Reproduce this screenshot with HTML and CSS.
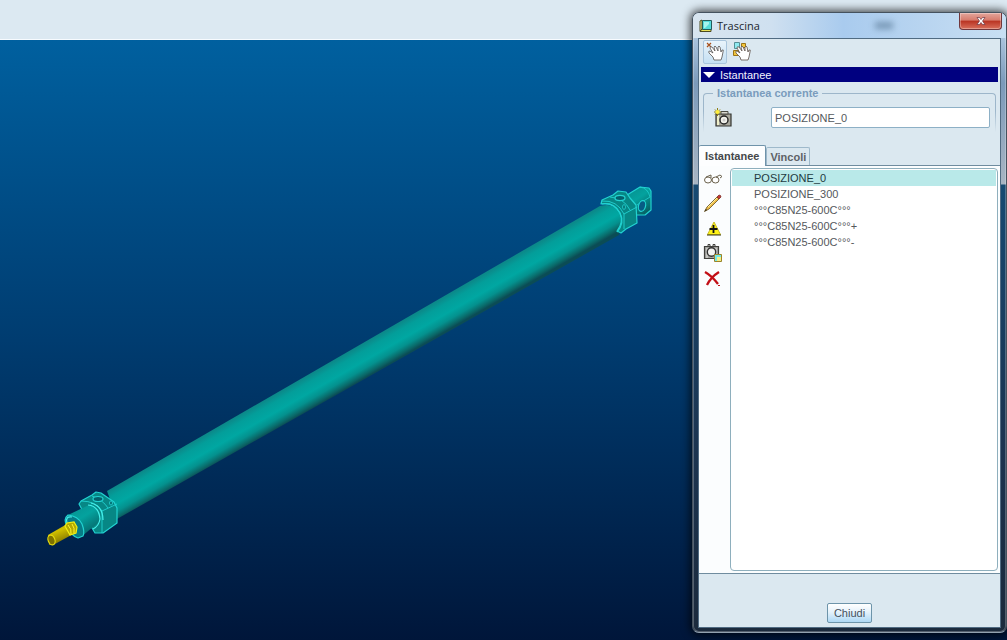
FILE: index.html
```html
<!DOCTYPE html>
<html lang="it">
<head>
<meta charset="utf-8">
<title>Trascina</title>
<link rel="stylesheet" href="styles.css">
</head>
<body>
<div class="app">
  <header class="topbar"></header>
  <main class="viewport">
    <svg class="scene" viewBox="0 40 1007 600" preserveAspectRatio="xMinYMin meet" role="img" aria-label="Cilindro">
      <defs>
        <linearGradient id="tube" gradientUnits="userSpaceOnUse" x1="355" y1="349" x2="370" y2="375">
          <stop offset="0" stop-color="#0b8a8a"/>
          <stop offset=".2" stop-color="#039e9a"/>
          <stop offset=".5" stop-color="#00a7a2"/>
          <stop offset=".72" stop-color="#04918e"/>
          <stop offset=".9" stop-color="#0a6868"/>
          <stop offset="1" stop-color="#0b4c55"/>
        </linearGradient>
        <linearGradient id="rod" x1="0" y1="0" x2=".5" y2="1">
          <stop offset="0" stop-color="#9a8f00"/>
          <stop offset=".4" stop-color="#d0c000"/>
          <stop offset="1" stop-color="#776a00"/>
        </linearGradient>
        <linearGradient id="collar" x1="0" y1="0" x2=".6" y2="1">
          <stop offset="0" stop-color="#078d8d"/>
          <stop offset=".5" stop-color="#04a29e"/>
          <stop offset="1" stop-color="#066467"/>
        </linearGradient>
      </defs>
      <path d="M107 491L600 206Q614 202 620 213Q623 222 619 235L117 519Z" fill="url(#tube)"/>
      <g stroke="#22d2d1" stroke-width="1.2" stroke-linejoin="round">
        <path d="M627 195L640 187L649 188L651 191V210L645 215L636 215L628 205Z" fill="url(#collar)"/>
        <path d="M640 187Q648 188 650 197L637 205" fill="none" stroke-width=".8"/>
        <ellipse cx="642" cy="206" rx="3.5" ry="5.5" transform="rotate(15 642 206)" fill="#075c84"/>
        <path d="M601 204L602 200L613 195L618 191L626 192L630 198L636 205L637 223L626 229L621 233L617 231Q624 222 620 213Q614 202 601 204Z" fill="#078785"/>
        <path d="M602 201Q617 200 624 214L637 207M624 214V229M610 197Q624 198 630 210" fill="none" stroke-width=".9"/>
        <ellipse cx="620" cy="198" rx="5" ry="2.6" fill="#04606c"/>
        <ellipse cx="624" cy="207" rx="1.5" ry="2.4" fill="#087477" stroke-width=".8"/>
        <path d="M602 204Q614 202 620 213Q625 223 617 232" fill="none"/>
      </g>
      <g stroke="#22d2d1" stroke-width="1.2" stroke-linejoin="round">
        <path d="M79 504L81 501L92 495L96 492L101 493L114 502L117 508V523L103 533L95 533L92 528Z" fill="#078785"/>
        <path d="M81 501Q96 501 102 511L117 504M102 511V533M92 496Q103 500 108 508" fill="none" stroke-width=".9"/>
        <ellipse cx="98" cy="499" rx="5" ry="2.5" fill="#04606c"/>
        <ellipse cx="111" cy="503" rx="1.6" ry="2" fill="#087477" stroke-width=".8"/>
        <path d="M68 515L91 504Q100 509 99 522L81 537Q67 532 68 515Z" fill="url(#collar)" stroke="none"/>
        <path d="M88 505Q99 506 100 519Q99 526 93 529M91 503Q103 506 103 520" fill="none" stroke="#45eeea"/>
        <path d="M68 515Q63 519 67 526Q70 535 78 538L83 536Q85 532 82 524Q78 516 68 515Z" fill="#077b86"/>
        <path d="M67 523Q65 516 72 517" fill="none" stroke="#45eeea"/>
      </g>
      <path d="M48 535L67 524L75 533L55 544L49 545Z" fill="url(#rod)"/>
      <path d="M65 526L67 523L74 522L77 527L76 533L70 535Z" fill="#b4a900" stroke="#f3ef12" stroke-width="1.2"/>
      <path d="M68 525Q72 529 71 534M72 524Q75 528 74 533" fill="none" stroke="#fff632"/>
      <ellipse cx="51.5" cy="540" rx="3.4" ry="5" transform="rotate(-20 51.5 540)" fill="#7e7200" stroke="#e6dc10" stroke-width="1.2"/>
    </svg>
  </main>

  <section class="window" aria-label="Trascina">
    <div class="titlebar">
      <svg class="appicon" viewBox="0 0 14 14" aria-hidden="true">
        <path d="M1 2L3 1V10L1 12Z" fill="#f6ef9a" stroke="#4a4a20"/>
        <path d="M1 12.5L3 10H12V12.5Z" fill="#eae25a" stroke="#4a4a20"/>
        <path d="M3.5 1.5H12.5V10.5H3.5Z" fill="#55dcdc" stroke="#235c5c"/>
        <path d="M5 3H10V5L6 9H5Z" fill="#a6f4ef"/>
      </svg>
      <h1 class="title">Trascina</h1>
      <span class="smudge"></span>
      <button class="close" type="button" aria-label="Chiudi finestra">
        <svg viewBox="0 0 10 8" aria-hidden="true"><path d="M1 .5H3.5L5 2.500L6.500 .5H9L6.500 4L9 7.500H6.500L5 5.500L3.500 7.500H1L3.500 4Z" fill="#fff" stroke="#6b3440" stroke-width=".7"/></svg>
      </button>
    </div>

    <div class="client">
      <div class="toolbar">
        <button class="tool selected" type="button" aria-label="Trascina punto">
          <svg viewBox="0 0 22 22" aria-hidden="true">
            <path d="M3 2L7 6M7 2L3 6" stroke="#a8501c" stroke-width="1.2"/>
            <path d="M10 19L9 16L5 12Q4 10 6 10L9 12L6 7Q6 5 8 6L11 10L10 6Q11 4 12 6L14 10L14 6Q15 4 16 6L17 11L18 9Q20 8 19 11L18 16L17 19Z" fill="#fff" stroke="#55504e" stroke-width=".8"/>
          </svg>
        </button>
        <button class="tool" type="button" aria-label="Trascina corpo">
          <svg viewBox="0 0 22 22" aria-hidden="true">
            <path d="M3.500 1.500H8.500V7.500H3.500Z" fill="#8eeaf0" stroke="#568f96"/>
            <path d="M10.500 2.500H14.500V6.500H10.500ZM2.500 9.500H7.500V14.500H2.500Z" fill="#f2c53c" stroke="#9b7415"/>
            <path d="M10 19L9 16L5 12Q4 10 6 10L9 12L6 7Q6 5 8 6L11 10L10 6Q11 4 12 6L14 10L14 6Q15 4 16 6L17 11L18 9Q20 8 19 11L18 16L17 19Z" fill="#fff" stroke="#5d4f48" stroke-width=".8"/>
          </svg>
        </button>
      </div>

      <button class="section" type="button" aria-expanded="true">
        <svg viewBox="0 0 12 6" aria-hidden="true"><path d="M0 0H12L6 6Z" fill="#fff"/></svg>
        Istantanee
      </button>

      <fieldset class="current">
        <legend>Istantanea corrente</legend>
        <div class="current-row">
          <button class="snap" type="button" aria-label="Scatta istantanea">
            <svg viewBox="0 0 20 20" aria-hidden="true">
              <path d="M3 6H18V18H3Z" fill="#aaa99f" stroke="#33332e" stroke-width="1.2"/>
              <path d="M4 7H6V17H4Z" fill="#eeeec9"/>
              <path d="M8 3.500H15V6H8Z" fill="#d8d8d0" stroke="#4c4c46"/>
              <circle cx="11" cy="12" r="4" fill="#f2f2ec" stroke="#222" stroke-width="1.4"/>
              <circle cx="11" cy="12" r="1.5" fill="#ccc"/>
              <path d="M4.500 0V8M1 4H8M2 1.500L7 6.500M7 1.500L2 6.500" stroke="#8d7e10"/>
              <circle cx="4.5" cy="4" r="2" fill="#ffef3c"/>
            </svg>
          </button>
          <input class="name" type="text" value="POSIZIONE_0" aria-label="Nome istantanea corrente">
        </div>
      </fieldset>

      <div class="tabs" role="tablist">
        <button class="tab active" type="button" role="tab" aria-selected="true">Istantanee</button>
        <button class="tab" type="button" role="tab" aria-selected="false">Vincoli</button>
      </div>

      <div class="panel" role="tabpanel">
        <div class="sidebar">
          <button class="side" type="button" aria-label="Visualizza">
            <svg viewBox="0 0 20 20" aria-hidden="true"><g fill="#fff" stroke="#6b624d"><ellipse cx="5" cy="12" rx="3.500" ry="3"/><ellipse cx="12.500" cy="12" rx="3.500" ry="3"/><path d="M3 9L8 7V10M13 9L17 7L19 8.500L17 10" fill="none"/></g></svg>
          </button>
          <button class="side" type="button" aria-label="Modifica">
            <svg viewBox="0 0 20 20" aria-hidden="true"><path d="M1.500 18.500L4 14L14 4L16 6L6 16Z" fill="#eebd48" stroke="#66501f" stroke-width=".8"/><path d="M5 14L14 5" stroke="#fff0a0"/><path d="M14 4L16 2Q18 2 18 4L16 6Z" fill="#c53831" stroke="#7c302a" stroke-width=".8"/><path d="M1.500 18.500L3 16L4 17Z" fill="#2c2515"/></svg>
          </button>
          <button class="side" type="button" aria-label="Aggiungi">
            <svg viewBox="0 0 20 20" aria-hidden="true"><path d="M11 4L17.500 16.500H4.500Z" fill="#fff316" stroke="#c9bd24"/><path d="M4 17H18" stroke="#3b390f"/><path d="M10.500 7V15M6.500 11H14.500" stroke="#111" stroke-width="1.8"/></svg>
          </button>
          <button class="side" type="button" aria-label="Usa nel disegno">
            <svg viewBox="0 0 20 20" aria-hidden="true"><path d="M1.500 3.500H15.500V15.500H1.500Z" fill="#a4a4a0" stroke="#40403c" stroke-width="1.2"/><path d="M4 15V5M13 5V11" stroke="#e8e8e4"/><path d="M5 3V1.500H7V3M10 3V1.500H12V3" fill="#ddd" stroke="#40403c"/><circle cx="8.500" cy="9" r="4.200" fill="#f4f4f2" stroke="#333" stroke-width="1.4"/><path d="M11.500 11.500H18.500V18.500H11.500Z" fill="#72e7e7" stroke="#9d8428"/><path d="M14 18V14H18V18Z" fill="#f5ef87"/></svg>
          </button>
          <button class="side" type="button" aria-label="Elimina">
            <svg viewBox="0 0 20 20" aria-hidden="true"><path d="M2 4Q9 8 15 16M16 4Q8 9 4 17" fill="none" stroke="#c20f16" stroke-width="2.300"/><path d="M15 17.500H17" stroke="#c20f16"/></svg>
          </button>
        </div>
        <ul class="list" role="listbox" aria-label="Istantanee">
          <li class="row chosen" role="option" aria-selected="true">POSIZIONE_0</li>
          <li class="row" role="option">POSIZIONE_300</li>
          <li class="row" role="option">°°°C85N25-600C°°°</li>
          <li class="row" role="option">°°°C85N25-600C°°°+</li>
          <li class="row" role="option">°°°C85N25-600C°°°-</li>
        </ul>
      </div>

      <footer class="footer">
        <button class="dismiss" type="button">Chiudi</button>
      </footer>
    </div>
  </section>
</div>
</body>
</html>
```
FILE: styles.css
```css
* { box-sizing: border-box; }

body {
  margin: 0;
  font: 11px/16px "Liberation Sans", Arial, sans-serif;
  color: #55585c;
}

button, input {
  font: inherit;
  color: inherit;
  margin: 0;
  padding: 0;
}

button {
  border: 0;
  background: none;
}

svg { display: block; }

.app {
  position: relative;
  display: flex;
  flex-direction: column;
  min-height: 100vh;
  overflow: hidden;
}

.topbar {
  height: 40px;
  background: #dce9f2;
  border-bottom: 1px solid #f7fbff;
}

.viewport {
  flex: 1;
  background: linear-gradient(#00609f, #003c70 50%, #00163a);
}

.scene { width: 100%; }

/* Floating dialog */
.window {
  position: absolute;
  top: 12px;
  right: 0;
  bottom: 7px;
  width: 315px;
  display: flex;
  flex-direction: column;
  padding: 0 5px 4px;
  border: 1px solid #45525e;
  border-bottom-color: #93a2b0;
  border-radius: 7px;
  background: linear-gradient(#c3daf0, #7b9aba 70px, #a8b5c3 171px, #174a72 172px, #1b3552 420px, #1c2a3c);
  box-shadow: inset 0 0 0 1px #ffffff40, 0 0 9px 2px #000000b0;
}

.titlebar {
  display: flex;
  align-items: center;
  gap: 4px;
  height: 25px;
  margin: 0 -5px;
  padding-left: 6px;
  border-radius: 6px 6px 0 0;
  background: linear-gradient(90deg, #d8e5ef, #cfe0f0 25%, #a9cbee 48%, #b9d5f0 75%, #c8dff3);
}

.appicon { width: 14px; height: 14px; }

.title {
  margin: 0;
  font: 11px/16px "Open Sans", sans-serif;
  color: #20262d;
}

.smudge {
  width: 18px;
  height: 7px;
  margin-left: auto;
  background: #7696b4;
  filter: blur(3px);
}

.close {
  display: flex;
  align-items: center;
  justify-content: center;
  align-self: flex-start;
  width: 43px;
  height: 17px;
  margin: 0 4px 0 62px;
  border: 1px solid #71373c;
  border-top: 0;
  border-radius: 0 0 4px 4px;
  background: linear-gradient(#e3a69c, #d77b6c 45%, #b93322 50%, #d9705c);
  box-shadow: inset 0 0 0 1px #ffffff50;
}

.close svg { width: 10px; height: 8px; }

.client {
  flex: 1;
  display: flex;
  flex-direction: column;
  border: 1px solid #506b82;
  background: #dbe8f0;
}

.toolbar {
  display: flex;
  gap: 3px;
  padding: 1px 4px 3px;
}

.tool {
  width: 24px;
  height: 24px;
  border: 1px solid transparent;
  border-radius: 2px;
}

.tool.selected {
  border-color: #a9c5dc;
  background: linear-gradient(#e9f4fb, #c5e0f3);
}

.section {
  display: flex;
  align-items: center;
  gap: 5px;
  height: 15px;
  margin: 0 2px;
  padding-left: 2px;
  background: #000080;
  color: #f2f4ff;
}

.section svg { width: 12px; height: 6px; }

.current {
  position: relative;
  min-width: 0;
  height: 50px;
  margin: 3px 4px 10px;
  padding: 0 5px 0 9px;
  border: 1px solid #9db6ca;
  border-bottom: 0;
  border-radius: 4px 4px 0 0;
}

.current::after {
  content: "";
  position: absolute;
  inset: 10px -1px -8px;
  background: linear-gradient(#dbe8f000, #dbe8f0 85%);
}

.current legend {
  padding: 0 4px;
  font-weight: bold;
  color: #7a9cbd;
}

.current-row {
  position: relative;
  z-index: 1;
  display: flex;
  align-items: center;
  gap: 38px;
  padding-top: 6px;
}

.snap svg { width: 20px; height: 20px; }

.name {
  flex: 1;
  min-width: 0;
  height: 21px;
  padding: 0 3px;
  border: 1px solid #8db0c6;
  border-radius: 2px;
  background: #fff;
}

.tabs {
  display: flex;
  align-items: flex-end;
  height: 20px;
}

.tab {
  height: 18px;
  padding: 0 3px;
  border: 1px solid #9eb9cb;
  border-bottom: 0;
  border-radius: 2px 2px 0 0;
  font-weight: bold;
  color: #5e6266;
}

.tab.active {
  position: relative;
  z-index: 1;
  height: 21px;
  margin-bottom: -1px;
  padding: 0 6px;
  border-color: #6f93aa;
  border-left-width: 0;
  background: #fdfeff;
  color: #44474a;
}

.panel {
  flex: 1;
  display: flex;
  padding: 2px;
  border: solid #6f8c9f;
  border-width: 1px 0;
  background: #fbfdfe;
}

.sidebar {
  display: flex;
  flex-direction: column;
  gap: 5px;
  width: 29px;
  padding: 0 2px;
}

.side svg { width: 20px; height: 20px; }

.list {
  flex: 1;
  margin: 0;
  padding: 1px;
  border: 1px solid #8eafbd;
  border-radius: 4px;
  background: #fff;
  list-style: none;
}

.row {
  padding-left: 22px;
  line-height: 16px;
}

.row.chosen {
  background: #b9e9e9;
  color: #1f3b41;
}

.footer {
  display: flex;
  justify-content: center;
  height: 53px;
  padding-top: 29px;
}

.dismiss {
  width: 45px;
  height: 20px;
  border: 1px solid #6d94aa;
  border-radius: 2px;
  background: linear-gradient(#fff, #e5f2fb 45%, #add8f5);
  color: #44505c;
}
```
